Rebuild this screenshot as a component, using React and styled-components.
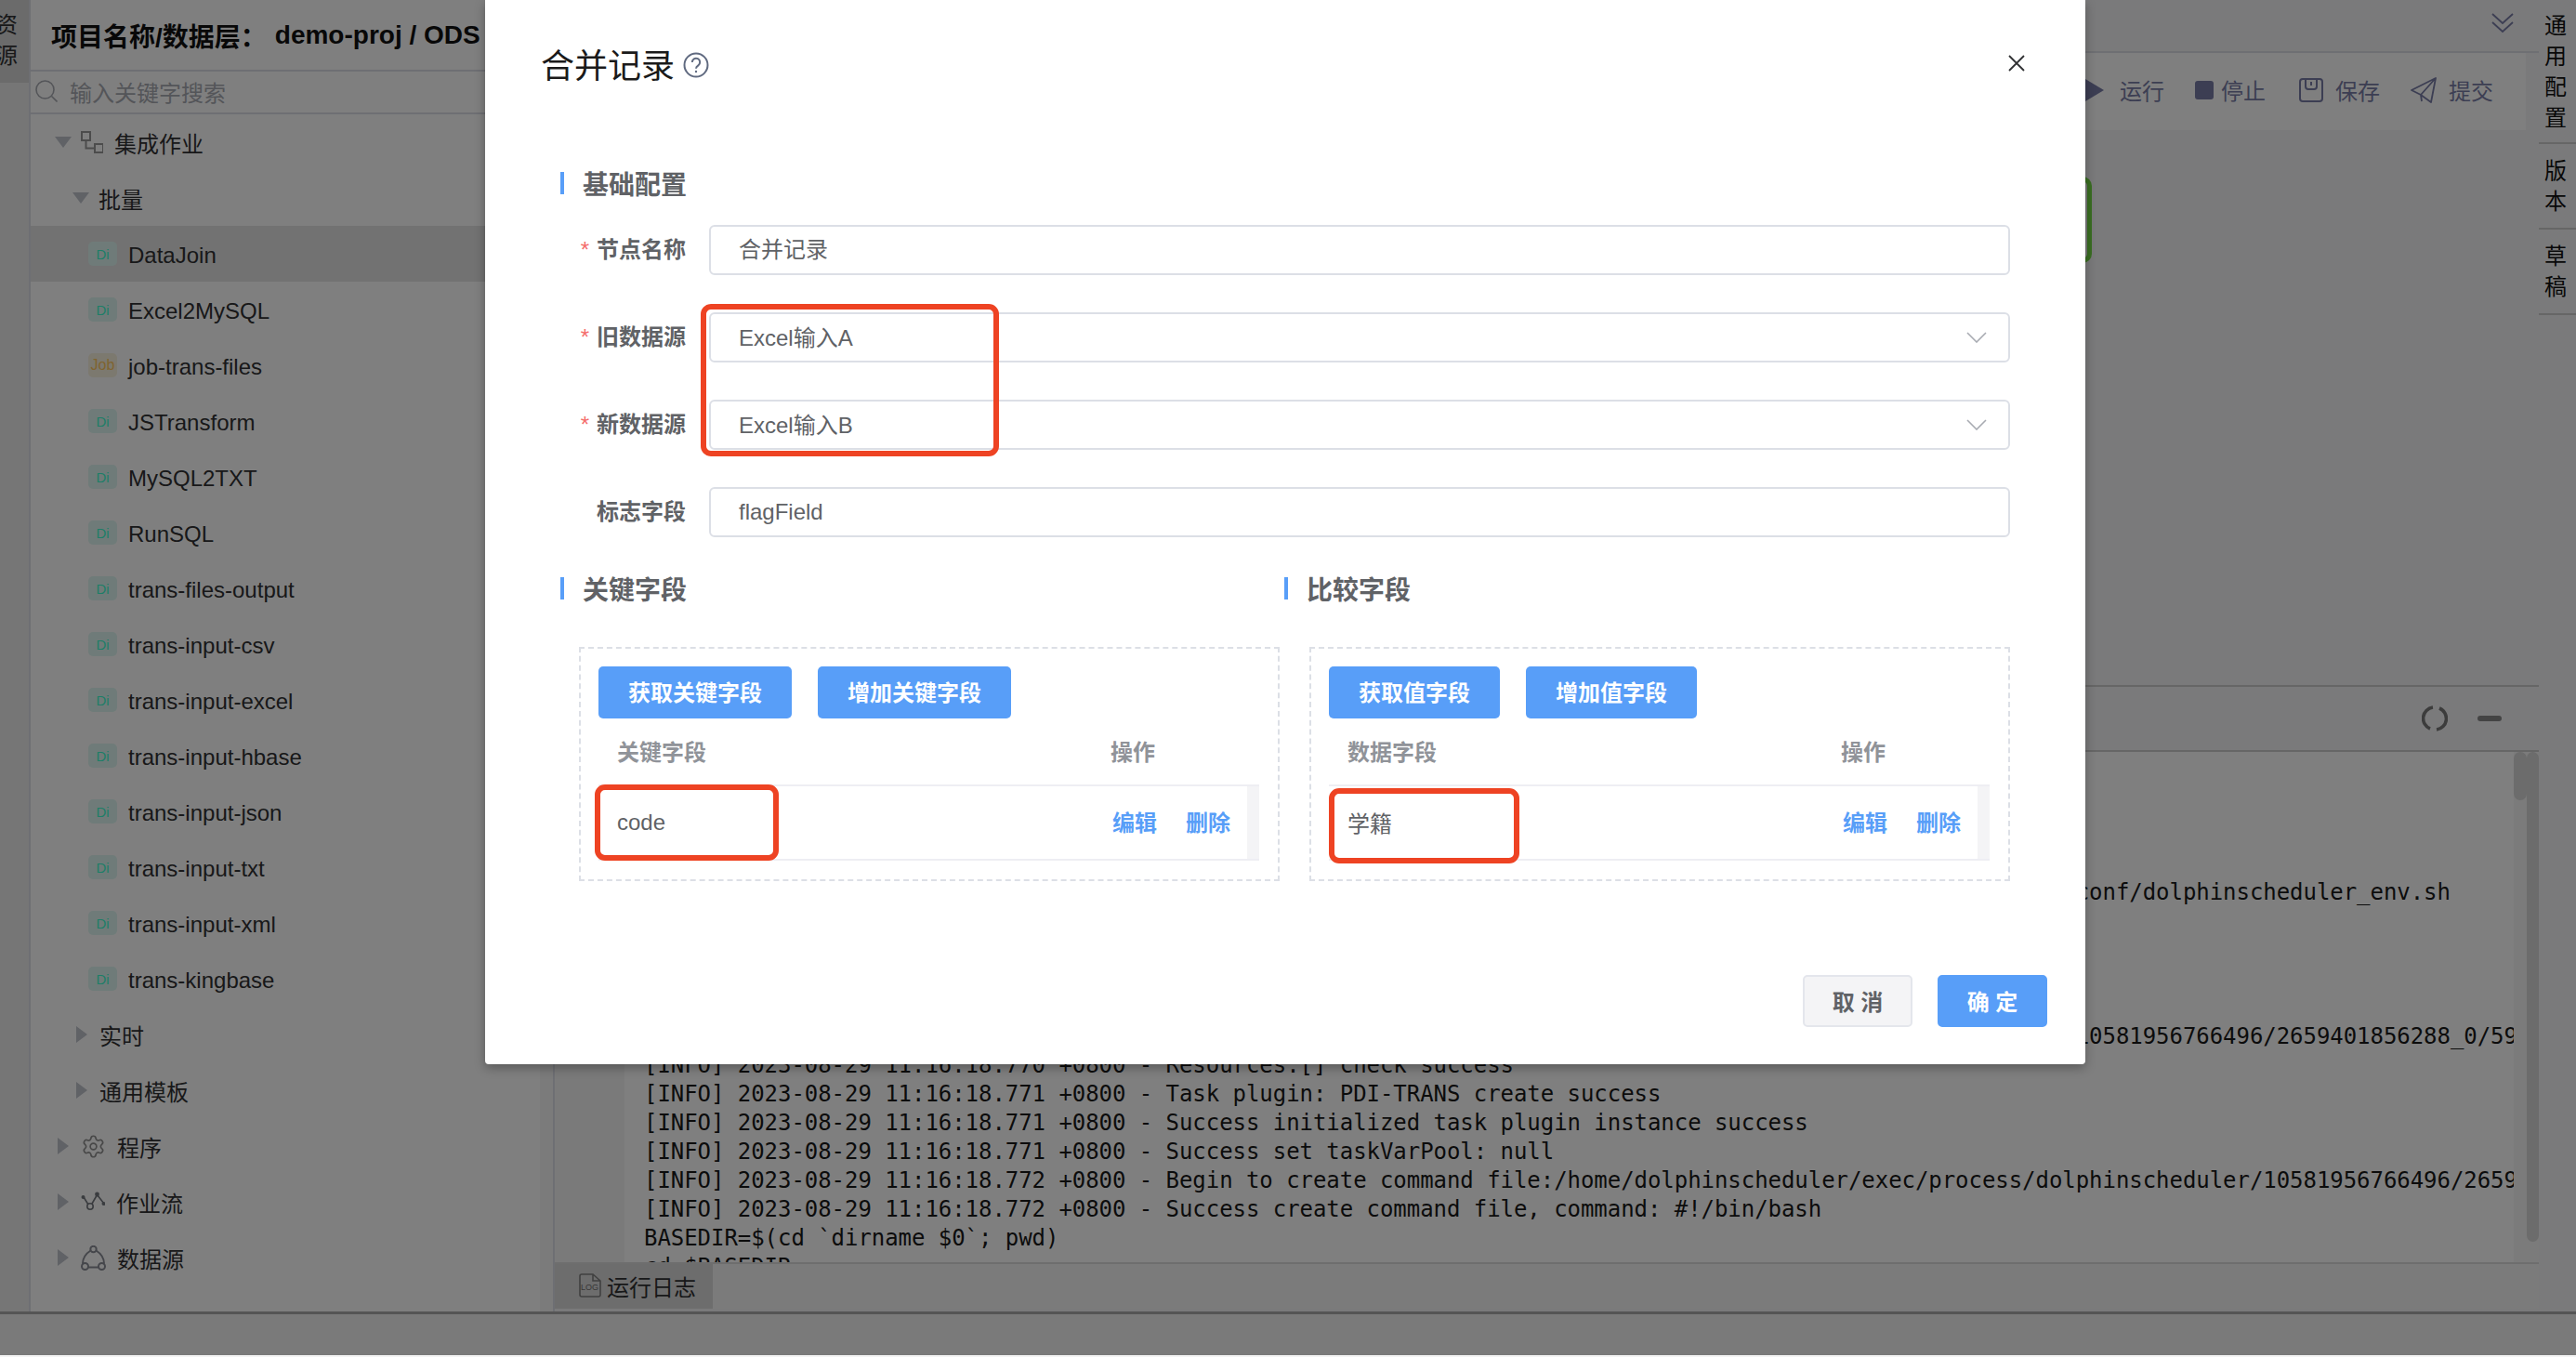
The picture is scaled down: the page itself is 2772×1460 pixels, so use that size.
import React from 'react'
import styled, { createGlobalStyle } from 'styled-components'
import { Settings } from 'lucide-react'

const GlobalStyle = createGlobalStyle`
    html, body {
        margin: 0;
        padding: 0;
        background: #fff;
        overflow: hidden;
    }
    * {
        box-sizing: border-box;
    }
    body {
        font-family: "Liberation Sans", "Noto Sans CJK SC", sans-serif;
        font-size: 24px;
        color: #303133;
    }
`

const MONO = `"DejaVu Sans Mono", "Liberation Mono", monospace`

const treeTop = [
    { label: 'DataJoin', tag: 'Di', active: true },
    { label: 'Excel2MySQL', tag: 'Di' },
    { label: 'job-trans-files', tag: 'Job' },
    { label: 'JSTransform', tag: 'Di' },
    { label: 'MySQL2TXT', tag: 'Di' },
    { label: 'RunSQL', tag: 'Di' },
    { label: 'trans-files-output', tag: 'Di' },
    { label: 'trans-input-csv', tag: 'Di' },
    { label: 'trans-input-excel', tag: 'Di' },
    { label: 'trans-input-hbase', tag: 'Di' },
    { label: 'trans-input-json', tag: 'Di' },
    { label: 'trans-input-txt', tag: 'Di' },
    { label: 'trans-input-xml', tag: 'Di' },
    { label: 'trans-kingbase', tag: 'Di' },
]

const tail = ' '.repeat(107)
const logLines = [
    '', '', '', '',
    tail + 'conf/dolphinscheduler_env.sh',
    '', '', '', '',
    tail + '10581956766496/2659401856288_0/5981',
    '[INFO] 2023-08-29 11:16:18.770 +0800 - Resources:[] check success',
    '[INFO] 2023-08-29 11:16:18.771 +0800 - Task plugin: PDI-TRANS create success',
    '[INFO] 2023-08-29 11:16:18.771 +0800 - Success initialized task plugin instance success',
    '[INFO] 2023-08-29 11:16:18.771 +0800 - Success set taskVarPool: null',
    '[INFO] 2023-08-29 11:16:18.772 +0800 - Begin to create command file:/home/dolphinscheduler/exec/process/dolphinscheduler/10581956766496/2659401856288',
    '[INFO] 2023-08-29 11:16:18.772 +0800 - Success create command file, command: #!/bin/bash',
    'BASEDIR=$(cd `dirname $0`; pwd)',
    'cd $BASEDIR',
]

function VerticalText({ text }) {
    return text.split('').map((c, i) => <RailChar key={i}>{c}</RailChar>)
}

function Search() {
    return (
        <svg width="24" height="24" viewBox="0 0 24 24" fill="none" stroke="#a8abb2" strokeWidth="1.6">
            <circle cx="10.5" cy="10.5" r="9.5" />
            <path d="M17.5 17.5 L23.5 23.5" />
        </svg>
    )
}

function FlowIcon() {
    return (
        <svg width="24" height="24" viewBox="0 0 24 24" fill="none" stroke="#999999" strokeWidth="2">
            <rect x="1" y="1" width="9" height="9" />
            <rect x="15" y="14" width="9" height="9" />
            <path d="M5.5 10 V18.5 H15" />
        </svg>
    )
}

function WorkflowIcon() {
    return (
        <svg width="26" height="22" viewBox="0 0 26 22" fill="none" stroke="#74787f" strokeWidth="1.6">
            <path d="M3 6 L8 14 M12 13 L17.5 3.5 L25 13" />
            <circle cx="10" cy="16" r="3.2" />
            <circle cx="2.5" cy="6" r="2" fill="#74787f" stroke="none" />
            <circle cx="17.5" cy="3" r="2.4" fill="#74787f" stroke="none" />
            <circle cx="24.5" cy="13" r="2" fill="#74787f" stroke="none" />
        </svg>
    )
}

function SourceIcon() {
    return (
        <svg width="27" height="27" viewBox="0 0 27 27" fill="none" stroke="#8a8d96" strokeWidth="2">
            <path d="M10.5 5.5 C5 9 2 14 2 19.5 M16.5 5.5 C22 9 25 14 25 19.5 M8 23.5 H19" />
            <circle cx="13.5" cy="4" r="3.2" />
            <circle cx="4.5" cy="22.5" r="3.5" />
            <circle cx="22.5" cy="22.5" r="3.5" />
        </svg>
    )
}

function LogIcon() {
    return (
        <svg width="26" height="26" viewBox="0 0 26 26" fill="none" stroke="#808080" strokeWidth="1.6">
            <path d="M2 3 a2 2 0 0 1 2-2 H16 L24 8 V23 a2 2 0 0 1-2 2 H4 a2 2 0 0 1-2-2 Z M16 1 V8 H24" />
            <text x="3" y="18" fontSize="9" fontFamily="Liberation Sans" fill="#707070" stroke="none">LOG</text>
        </svg>
    )
}

function HelpIcon() {
    return (
        <svg width="28" height="28" viewBox="0 0 28 28" fill="none" stroke="#606a80" strokeWidth="2">
            <circle cx="14" cy="14" r="12.5" />
            <path d="M9.8 11 a4.2 4.2 0 1 1 6.6 3.4 c-1.5 1-2.4 1.8-2.4 3.4" />
            <circle cx="14" cy="21" r="1.2" fill="#606a80" stroke="none" />
        </svg>
    )
}

function CloseIcon() {
    return (
        <svg width="18" height="18" viewBox="0 0 18 18" fill="none" stroke="#303133" strokeWidth="1.8">
            <path d="M1 1 L17 17 M17 1 L1 17" />
        </svg>
    )
}

function SelectArrow() {
    return (
        <svg width="22" height="12" viewBox="0 0 22 12" fill="none" stroke="#a8abb2" strokeWidth="1.6">
            <path d="M1 1 L11 11 L21 1" />
        </svg>
    )
}

function Form({ label, value, required, select, lift }) {
    return (
        <FormRow>
            <FormLabel>
                {required && <Star>*</Star>}
                {label}
            </FormLabel>
            <InputBox>
                <InputText $lift={lift}>{value}</InputText>
                {select && <SelectArrow />}
            </InputBox>
        </FormRow>
    )
}

function FieldBox({ title, fetchText, addText, column, value, inset }) {
    return (
        <FieldColumn>
            <SectionTitle>{title}</SectionTitle>
            <DashedBox $inset={inset}>
                <BoxButtons>
                    <BlueButton>{fetchText}</BlueButton>
                    <BlueButton>{addText}</BlueButton>
                </BoxButtons>
                <TableHead>
                    <span>{column}</span>
                    <span>操作</span>
                </TableHead>
                <TableRow>
                    <TableCell>{value}</TableCell>
                    <TableOps>
                        <LinkText>编辑</LinkText>
                        <LinkText>删除</LinkText>
                    </TableOps>
                    <RowGutter />
                </TableRow>
            </DashedBox>
        </FieldColumn>
    )
}

export default function App() {
    return (
        <>
            <GlobalStyle />
            <Page>
                <Main>
                    <LeftRail>
                        <LeftTab>
                            <VerticalText text="资源" />
                        </LeftTab>
                    </LeftRail>
                    <Sidebar>
                        <ProjectHead>项目名称/数据层：<ProjectName>demo-proj / ODS</ProjectName></ProjectHead>
                        <SearchRow>
                            <Search />
                            <span>输入关键字搜索</span>
                        </SearchRow>
                        <Tree>
                            <TreeRow $pad={26}>
                                <Arrow $open />
                                <TreeIcon><FlowIcon /></TreeIcon>
                                集成作业
                            </TreeRow>
                            <TreeRow $pad={45}>
                                <Arrow $open />
                                批量
                            </TreeRow>
                            {treeTop.map((item) => (
                                <TreeRow $pad={62} $active={item.active} key={item.label}>
                                    <Badge $job={item.tag === 'Job'}>{item.tag}</Badge>
                                    <LeafLabel>{item.label}</LeafLabel>
                                </TreeRow>
                            ))}
                            <TreeRow $pad={49}>
                                <Arrow />
                                实时
                            </TreeRow>
                            <TreeRow $pad={49}>
                                <Arrow />
                                通用模板
                            </TreeRow>
                            <TreeRow $pad={29}>
                                <Arrow />
                                <TreeIcon><Settings size={27} strokeWidth={1.5} color="#909090" /></TreeIcon>
                                程序
                            </TreeRow>
                            <TreeRow $pad={29}>
                                <Arrow />
                                <TreeIcon><WorkflowIcon /></TreeIcon>
                                作业流
                            </TreeRow>
                            <TreeRow $pad={29}>
                                <Arrow />
                                <TreeIcon><SourceIcon /></TreeIcon>
                                数据源
                            </TreeRow>
                        </Tree>
                    </Sidebar>
                    <SideGutter />
                    <Workspace>
                        <TopBar>
                            <svg width="24" height="22" viewBox="0 0 24 22" fill="none" stroke="#787ca6" strokeWidth="1.8">
                                <path d="M1 1 L12 11 L23 1 M1 10 L12 20 L23 10" />
                            </svg>
                        </TopBar>
                        <ToolBar>
                            <ToolItem $gap={17} $right={33}>
                                <svg width="20" height="24" viewBox="0 0 20 24"><path d="M0 0 L20 12 L0 24 Z" fill="#787ca6" /></svg>
                                运行
                            </ToolItem>
                            <ToolItem $gap={8} $right={36}>
                                <StopBlock />
                                停止
                            </ToolItem>
                            <ToolItem $gap={13} $right={33}>
                                <svg width="26" height="26" viewBox="0 0 26 26" fill="none" stroke="#787ca6" strokeWidth="2">
                                    <rect x="1" y="1" width="24" height="24" rx="3" />
                                    <path d="M7 1 V9 a3 3 0 0 0 3 3 H16 a3 3 0 0 0 3-3 V1 M13 4 V8" />
                                </svg>
                                保存
                            </ToolItem>
                            <ToolItem $gap={13} $right={35}>
                                <svg width="28" height="28" viewBox="0 0 28 28" fill="none" stroke="#787ca6" strokeWidth="1.8" strokeLinejoin="round">
                                    <path d="M1 14 L27 1 L22 27 L11 19 Z M11 19 L27 1 M11 19 L12 26" />
                                </svg>
                                提交
                            </ToolItem>
                        </ToolBar>
                        <Canvas>
                            <CanvasNode />
                        </Canvas>
                        <LogHead>
                            <svg width="28" height="28" viewBox="0 0 28 28" fill="none" stroke="#787878" strokeWidth="3.6">
                                <path d="M12 2 A12 12 0 0 0 9 25 M16 26 A12 12 0 0 0 19 3" />
                            </svg>
                            <MinusBar />
                        </LogHead>
                        <LogBody>
                            <LogGutter />
                            <LogText>
                                {logLines.map((line, i) => <LogLine key={i}>{line || ' '}</LogLine>)}
                            </LogText>
                            <ThumbTrack><Thumb $h={52} /></ThumbTrack>
                            <ThumbTrack><Thumb $h={527} /></ThumbTrack>
                        </LogBody>
                        <TabBar>
                            <LogTab>
                                <LogIcon />
                                运行日志
                            </LogTab>
                        </TabBar>
                    </Workspace>
                    <RightRail>
                        <RailItem><VerticalText text="通用配置" /></RailItem>
                        <RailItem $h={92}><VerticalText text="版本" /></RailItem>
                        <RailItem $h={92}><VerticalText text="草稿" /></RailItem>
                    </RightRail>
                </Main>
                <BottomBar />
                <Overlay>
                    <Modal>
                        <ModalHead>
                            <ModalTitle>
                                合并记录
                                <HelpIcon />
                            </ModalTitle>
                            <CloseIcon />
                        </ModalHead>
                        <BaseSection>
                            <SectionTitle>基础配置</SectionTitle>
                        </BaseSection>
                        <FormList>
                            <Form required label="节点名称" value="合并记录" lift={3} />
                            <Form required select label="旧数据源" value="Excel输入A" lift={2} />
                            <Form required select label="新数据源" value="Excel输入B" lift={2} />
                            <Form label="标志字段" value="flagField" lift={0} />
                        </FormList>
                        <FieldColumns>
                            <FieldBox title="关键字段" fetchText="获取关键字段" addText="增加关键字段" column="关键字段" value="code" inset={20} />
                            <FieldBox title="比较字段" fetchText="获取值字段" addText="增加值字段" column="数据字段" value="学籍" inset={27} />
                        </FieldColumns>
                        <ModalFoot>
                            <FootButton>取 消</FootButton>
                            <FootButton $primary>确 定</FootButton>
                        </ModalFoot>
                        <RedMark $x={232} $y={327} $w={321} $h={164} />
                        <RedMark $x={118} $y={844} $w={198} $h={82} />
                        <RedMark $x={908} $y={848} $w={205} $h={81} />
                    </Modal>
                </Overlay>
            </Page>
        </>
    )
}

const Page = styled.div`
    position: relative;
    width: 2772px;
    height: 1460px;
    display: flex;
    flex-direction: column;
    overflow: hidden;
`
const Main = styled.div`
    display: flex;
    height: 1411px;
`
const LeftRail = styled.div`
    width: 33px;
    background: #ececec;
    border-right: 2px solid #dcdfe6;
`
const LeftTab = styled.div`
    height: 89px;
    width: 31px;
    background: #d6d6d6;
    overflow: hidden;
    padding-top: 10px;
    color: #303133;
    > div {
        margin-left: -5px;
    }
`
const RailChar = styled.div`
    width: 24px;
    height: 33px;
    line-height: 33px;
    font-size: 24px;
    text-align: center;
`
const Sidebar = styled.div`
    width: 548px;
    display: flex;
    flex-direction: column;
    background: #fff;
`
const ProjectHead = styled.div`
    height: 77px;
    padding-left: 22px;
    display: flex;
    align-items: center;
    white-space: nowrap;
    font-size: 28px;
    font-weight: 700;
    color: #111;
    border-bottom: 2px solid #dcdfe6;
`
const ProjectName = styled.span`
    margin-left: 9px;
`
const SearchRow = styled.div`
    height: 46px;
    padding: 0 0 2px 5px;
    display: flex;
    align-items: center;
    gap: 13px;
    color: #a8abb2;
    border-bottom: 2px solid #dcdfe6;
`
const Tree = styled.div`
    flex: 1;
`
const TreeRow = styled.div`
    height: 60px;
    display: flex;
    align-items: center;
    padding-left: ${(p) => p.$pad}px;
    background: ${(p) => (p.$active ? '#e4e4e4' : 'transparent')};
    white-space: nowrap;
`
const LeafLabel = styled.span`
    margin-top: 3px;
`
const Arrow = styled.span`
    width: 0;
    height: 0;
    border-style: solid;
    border-color: transparent;
    ${(p) => p.$open
        ? `border-width: 12px 9.5px 0 9.5px; border-top-color: #c0c4cc; margin-right: 10px;`
        : `border-width: 9.5px 0 9.5px 12px; border-left-color: #c0c4cc; margin-right: 13px;`}
`
const TreeIcon = styled.span`
    display: flex;
    margin-right: 12px;
`
const Badge = styled.span`
    width: 31px;
    height: 26px;
    margin-right: 12px;
    border-radius: 5px;
    display: flex;
    align-items: center;
    justify-content: center;
    font-size: ${(p) => (p.$job ? 16 : 15)}px;
    color: ${(p) => (p.$job ? '#ffc860' : '#3cfcd0')};
    background: ${(p) => (p.$job ? '#f9f2df' : '#dff7f2')};
`
const SideGutter = styled.div`
    width: 14px;
    background: #f6f6f6;
`
const Workspace = styled.div`
    width: 2137px;
    display: flex;
    flex-direction: column;
    background: #f4f4f6;
    border-left: 2px solid #dcdfe6;
`
const TopBar = styled.div`
    height: 57px;
    padding: 0 27px 6px 0;
    display: flex;
    align-items: center;
    justify-content: flex-end;
    border-bottom: 2px solid #dcdfe6;
`
const ToolBar = styled.div`
    height: 83px;
    width: 2121px;
    padding-bottom: 4px;
    display: flex;
    align-items: center;
    justify-content: flex-end;
    background: #fff;
`
const ToolItem = styled.div`
    display: flex;
    align-items: center;
    gap: ${(p) => p.$gap}px;
    margin-right: ${(p) => p.$right}px;
    color: #787ca6;
    white-space: nowrap;
`
const StopBlock = styled.span`
    width: 20px;
    height: 20px;
    border-radius: 3px;
    background: #787ca6;
`
const Canvas = styled.div`
    position: relative;
    height: 599px;
    border-bottom: 2px solid #cccccc;
`
const CanvasNode = styled.div`
    position: absolute;
    left: 1354px;
    top: 50px;
    width: 300px;
    height: 93px;
    border: 5px solid #74dc44;
    border-radius: 10px;
`
const LogHead = styled.div`
    height: 70px;
    padding-right: 40px;
    display: flex;
    align-items: center;
    justify-content: flex-end;
    gap: 32px;
    border-bottom: 2px solid #cccccc;
`
const MinusBar = styled.span`
    width: 26px;
    height: 6px;
    border-radius: 3px;
    background: #888;
`
const LogBody = styled.div`
    height: 549px;
    display: flex;
    background: #fff;
    overflow: hidden;
`
const LogGutter = styled.div`
    width: 75px;
    flex: none;
    background: #f4f4f4;
`
const LogText = styled.div`
    width: 2033px;
    flex: none;
    padding: 12px 0 0 21px;
    overflow: hidden;
    font-family: ${MONO};
    font-size: 24px;
    letter-spacing: -0.05px;
    color: #181818;
`
const LogLine = styled.div`
    height: 31px;
    line-height: 31px;
    white-space: pre;
`
const ThumbTrack = styled.div`
    width: 13.5px;
    flex: none;
    background: #f6f6f6;
`
const Thumb = styled.div`
    height: ${(p) => p.$h}px;
    background: #d8d8d8;
    border-radius: 7px;
`
const TabBar = styled.div`
    height: 50px;
    background: #f6f6f6;
    border-top: 2px solid #dddddd;
    margin-bottom: 3px;
`
const LogTab = styled.div`
    width: 170px;
    height: 48px;
    padding: 0 0 2px 25px;
    display: flex;
    align-items: center;
    gap: 5px;
    background: #dadada;
`
const RightRail = styled.div`
    width: 40px;
    background: #f4f4f6;
`
const RailItem = styled.div`
    height: ${(p) => p.$h || 155}px;
    padding-right: 4px;
    display: flex;
    flex-direction: column;
    align-items: center;
    justify-content: center;
    border-bottom: 2px solid #cccccc;
    color: #111;
`
const BottomBar = styled.div`
    flex: 1;
    background: #f4f4f4;
    border-top: 3px solid #aaaaaa;
`
const Overlay = styled.div`
    position: absolute;
    left: 0;
    top: 0;
    width: 100%;
    height: 1458px;
    background: rgba(0, 0, 0, 0.5);
    padding-left: 522px;
`
const Modal = styled.div`
    position: relative;
    width: 1722px;
    height: 1145px;
    background: #fff;
    border-radius: 0 0 4px 4px;
    box-shadow: 0 4px 12px rgba(0, 0, 0, 0.3);
    color: #606266;
`
const ModalHead = styled.div`
    height: 136px;
    padding: 0 65px 0 60px;
    display: flex;
    align-items: center;
    justify-content: space-between;
`
const ModalTitle = styled.div`
    display: flex;
    align-items: center;
    gap: 9px;
    font-size: 36px;
    color: #1a1a1a;
    > svg {
        margin-top: 4px;
    }
`
const BaseSection = styled.div`
    margin: 49px 0 33px 81px;
`
const SectionTitle = styled.div`
    height: 24px;
    display: flex;
    align-items: center;
    padding-left: 20px;
    border-left: 4px solid #589ef8;
    font-size: 28px;
    font-weight: 700;
    color: #606266;
    white-space: nowrap;
`
const FormList = styled.div`
    display: flex;
    flex-direction: column;
    gap: 40px;
`
const FormRow = styled.div`
    display: flex;
    align-items: center;
    height: 54px;
`
const FormLabel = styled.div`
    width: 216px;
    margin-right: 25px;
    margin-top: -6px;
    text-align: right;
    font-weight: 700;
    color: #606266;
`
const Star = styled.span`
    color: #f56c6c;
    font-weight: 400;
    margin-right: 8px;
`
const InputBox = styled.div`
    width: 1400px;
    height: 54px;
    padding: 0 23px 0 30px;
    display: flex;
    align-items: center;
    justify-content: space-between;
    border: 2px solid #dcdfe6;
    border-radius: 6px;
`
const InputText = styled.span`
    margin-bottom: ${(p) => p.$lift * 2}px;
`
const FieldColumns = styled.div`
    margin: 43px 0 0 81px;
    display: flex;
`
const FieldColumn = styled.div`
    width: 779px;
`
const DashedBox = styled.div`
    margin: 51px 0 0 ${(p) => p.$inset}px;
    width: 754px;
    height: 252px;
    padding: 19px 0 0 19px;
    border: 2px dashed #dcdfe6;
`
const BoxButtons = styled.div`
    display: flex;
    gap: 28px;
`
const BlueButton = styled.div`
    height: 56px;
    padding: 0 32px 3px;
    display: flex;
    align-items: center;
    border-radius: 5px;
    background: #589ef8;
    color: #fff;
    font-weight: 700;
    white-space: nowrap;
`
const TableHead = styled.div`
    width: 711px;
    height: 71px;
    padding: 0 0 3px 20px;
    display: grid;
    grid-template-columns: 551px 1fr;
    align-items: center;
    color: #909399;
    font-weight: 700;
    > span:last-child {
        margin-left: -20px;
    }
`
const TableRow = styled.div`
    width: 711px;
    height: 82px;
    display: flex;
    border-top: 2px solid #eeeef3;
    border-bottom: 2px solid #eeeef3;
`
const TableCell = styled.div`
    width: 553px;
    padding-left: 20px;
    padding-bottom: 1px;
    display: flex;
    align-items: center;
`
const TableOps = styled.div`
    flex: 1;
    padding-bottom: 4px;
    display: flex;
    align-items: center;
    gap: 31px;
`
const LinkText = styled.span`
    color: #589ef8;
    font-weight: 700;
`
const RowGutter = styled.div`
    width: 13px;
    background: #f4f4f6;
`
const ModalFoot = styled.div`
    margin-top: 101px;
    padding-right: 41px;
    display: flex;
    justify-content: flex-end;
    gap: 27px;
`
const FootButton = styled.div`
    width: 118px;
    height: 56px;
    padding-bottom: 2px;
    display: flex;
    align-items: center;
    justify-content: center;
    border-radius: 5px;
    font-weight: 700;
    white-space: pre;
    background: ${(p) => (p.$primary ? '#589ef8' : '#f4f4f6')};
    border: 2px solid ${(p) => (p.$primary ? '#589ef8' : '#e4e6ec')};
    color: ${(p) => (p.$primary ? '#fff' : '#606266')};
`
const RedMark = styled.div`
    position: absolute;
    left: ${(p) => p.$x}px;
    top: ${(p) => p.$y}px;
    width: ${(p) => p.$w}px;
    height: ${(p) => p.$h}px;
    border: 6px solid #ee4323;
    border-radius: 11px;
`
